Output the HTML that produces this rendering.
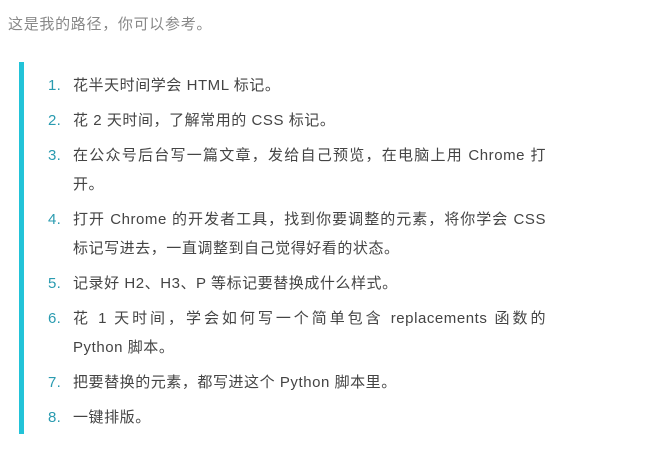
<!DOCTYPE html><html><head><meta charset="utf-8"><style>
body{margin:0;background:#fff;font-family:"Liberation Sans","Noto Sans CJK SC",sans-serif;font-size:15px;}
p{position:absolute;left:8px;top:14px;margin:0;color:#888;line-height:22px;letter-spacing:0.7px;}
.bq{position:absolute;left:19px;top:62px;width:5px;height:372px;background:#22c3d8;}
ol{position:absolute;left:73px;top:71px;width:473px;margin:0;padding:0;list-style:none;color:#444;letter-spacing:0.55px;}
li{position:relative;line-height:29px;margin-bottom:6px;text-align:justify;}
li span{position:absolute;left:-25px;color:#2a9bb0;letter-spacing:0.3px;}
</style></head><body>
<p>这是我的路径，你可以参考。</p>
<div class="bq"></div>
<ol>
<li><span>1.</span>花半天时间学会 HTML 标记。</li>
<li><span>2.</span>花 2 天时间，了解常用的 CSS 标记。</li>
<li><span>3.</span>在公众号后台写一篇文章，发给自己预览，在电脑上用 Chrome 打开。</li>
<li><span>4.</span>打开 Chrome 的开发者工具，找到你要调整的元素，将你学会 CSS 标记写进去，一直调整到自己觉得好看的状态。</li>
<li><span>5.</span>记录好 H2、H3、P 等标记要替换成什么样式。</li>
<li><span>6.</span>花 1 天时间，学会如何写一个简单包含 replacements 函数的 Python 脚本。</li>
<li><span>7.</span>把要替换的元素，都写进这个 Python 脚本里。</li>
<li><span>8.</span>一键排版。</li>
</ol>
</body></html>
